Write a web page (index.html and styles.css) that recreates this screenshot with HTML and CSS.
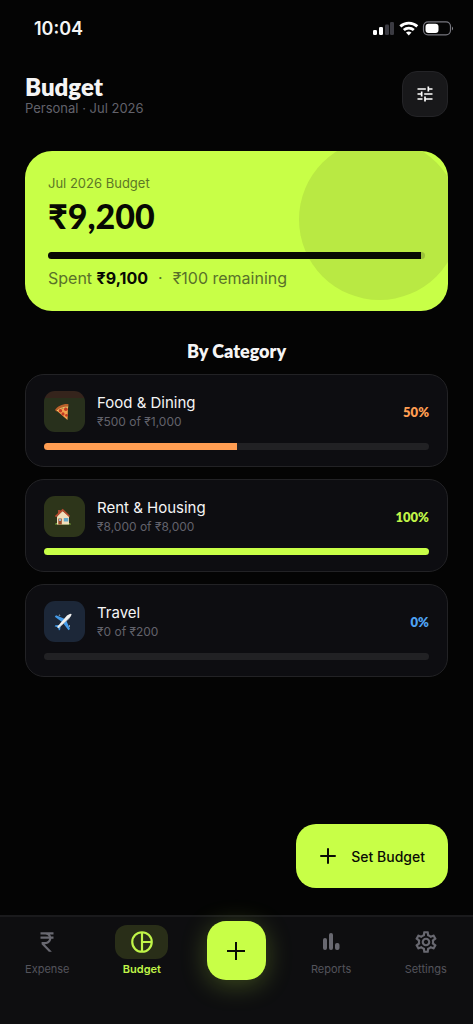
FILE: index.html
```html
<!DOCTYPE html>
<html lang="en">
<head>
<meta charset="utf-8">
<meta name="viewport" content="width=device-width, initial-scale=1">
<title>Budget</title>
<link rel="stylesheet" href="styles.css">
</head>
<body>
<div class="app">
  <div class="status">
    <span class="status-time">10:04</span>
    <svg class="status-icons" width="82" height="16" viewBox="0 0 82 16" aria-hidden="true">
      <rect x="0" y="9" width="4" height="5" rx="1.2" fill="#fff"/>
      <rect x="6" y="6" width="4" height="8" rx="1.2" fill="#fff"/>
      <rect x="12" y="3.500" width="4" height="10.500" rx="1.200" fill="#3b3b42"/>
      <rect x="17" y="1" width="4" height="13" rx="1.200" fill="#3b3b42"/>
      <g fill="none" stroke="#fff" stroke-width="2.800">
        <path d="M27.300 5.400a12.500 12.500 0 0 1 17 0"/>
        <path d="M30.800 9a7.500 7.500 0 0 1 10 0"/>
      </g>
      <path d="M33 11.600a4.200 4.200 0 0 1 5.500 0L35.750 14.500z" fill="#fff"/>
      <rect x="50.500" y="0.800" width="27" height="13" rx="4.500" fill="none" stroke="#77777f" stroke-width="1.200"/>
      <rect x="52.500" y="2.700" width="13" height="9.300" rx="3" fill="#fff"/>
      <path d="M79 5.500q2 2-0 4z" fill="#8a8a92"/>
    </svg>
  </div>

  <header class="header">
    <div>
      <h1 class="title">Budget</h1>
      <p class="subtitle">Personal · Jul 2026</p>
    </div>
    <button class="tune" type="button" aria-label="Filters">
      <svg width="20" height="20" viewBox="0 0 24 24" fill="#fff" aria-hidden="true"><path d="M3 17v2h6v-2zM3 5v2h10V5zm10 16v-2h8v-2h-8v-2h-2v6zM7 9v2H3v2h4v2h2V9zm14 4v-2H11v2zm-6-4h2V7h4V5h-4V3h-2z"/></svg>
    </button>
  </header>

  <main class="main">
    <section class="summary">
      <p class="summary-label">Jul 2026 Budget</p>
      <p class="summary-amount">₹9,200</p>
      <div class="summary-track"><div class="summary-fill" style="width:98.9%"></div></div>
      <p class="summary-note"><span>Spent <strong>₹9,100</strong></span><span>·</span><span>₹100 remaining</span></p>
    </section>

    <h2 class="section-title">By Category</h2>

    <div class="list">
      <article class="card food">
        <div class="card-row">
          <div class="badge">
            <svg width="18" height="18" viewBox="0 0 18 18" aria-hidden="true">
              <path d="M2.500 7.500 14 3.500 13.500 17z" fill="#f4a24e"/>
              <path d="M1 7C3.500 3.200 9 .600 14.500 1.200L14.300 3.800C10 3.500 6 5.300 2.600 8.500z" fill="#b9602b"/>
              <path d="M3 7.900C6 5.300 10 3.900 14.200 4" fill="none" stroke="#f7c66b"/>
              <circle cx="6.500" cy="7.800" r="1.700" fill="#c43a22"/><circle cx="11.800" cy="6.300" r="1.800" fill="#c43a22"/><circle cx="9" cy="10.900" r="1.600" fill="#c43a22"/><circle cx="12.500" cy="12.300" r="1.400" fill="#c43a22"/>
            </svg>
          </div>
          <div class="card-text"><h3 class="card-name">Food &amp; Dining</h3><p class="card-meta">₹500 of ₹1,000</p></div>
          <span class="percent">50%</span>
        </div>
        <div class="track"><div class="fill" style="width:50%"></div></div>
      </article>

      <article class="card rent">
        <div class="card-row">
          <div class="badge">
            <svg width="18" height="18" viewBox="0 0 18 18" aria-hidden="true">
              <path d="M1 16.500Q1 14.500 3.500 15h11.500q2 0 2 1.500z" fill="#78a83b"/>
              <path d="M4 2h2.500v4H4z" fill="#a64a30"/>
              <path d="M3 8.500 8.500 3l6.500 5v8.500H3z" fill="#f0ddbb"/>
              <path d="M1.500 8.700 8.700 2l6.800 6.500" fill="none" stroke="#b84a2e" stroke-width="1.700"/>
              <path d="M4.300 10.500h3.500v6H4.300z" fill="#9a4b2b"/><path d="M5 11h2v2H5z" fill="#87bad0"/>
              <path d="M9.800 10h4.500v3.500H9.800z" fill="#65a9ca"/>
            </svg>
          </div>
          <div class="card-text"><h3 class="card-name">Rent &amp; Housing</h3><p class="card-meta">₹8,000 of ₹8,000</p></div>
          <span class="percent">100%</span>
        </div>
        <div class="track"><div class="fill" style="width:100%"></div></div>
      </article>

      <article class="card travel">
        <div class="card-row">
          <div class="badge">
            <svg width="18" height="18" viewBox="0 0 18 18" aria-hidden="true">
              <path d="M11 6 2 2.300.800 3.800 8 9zM12 7l4 9-1.500 1.200L9 10z" fill="#459be8"/>
              <path d="M5 12 1.500 12.200.600 13.300 4 14.500 5 17.500 6.200 16.500 6.500 13z" fill="#459be8"/>
              <path d="M3.500 13.500 13 2.500Q16.500.300 17.300 1T15.500 5L4.800 14.800Q3 15.300 3.500 13.500z" fill="#f1f1ef"/>
              <path d="M5 14.500 15.500 5" stroke="#b9c0c6" stroke-width=".8"/>
              <path d="m4.500 2.600 1-1 1 1zM14.800 13l1.200-1v2z" fill="#d8e1e8"/>
            </svg>
          </div>
          <div class="card-text"><h3 class="card-name">Travel</h3><p class="card-meta">₹0 of ₹200</p></div>
          <span class="percent">0%</span>
        </div>
        <div class="track"><div class="fill" style="width:0%"></div></div>
      </article>
    </div>

    <button class="set-budget" type="button">
      <svg width="16" height="16" viewBox="0 0 16 16" fill="none" stroke="#0a0c05" stroke-width="2" stroke-linecap="round" aria-hidden="true"><path d="M8 1v14M1 8h14"/></svg>
      Set Budget
    </button>
  </main>

  <nav class="nav">
    <a class="tab" href="#expense">
      <span class="tab-icon"><svg width="26" height="26" viewBox="0 0 24 24" fill="currentColor" aria-hidden="true"><path d="M13.660 7c-.560-1.180-1.760-2-3.160-2H6V3h12v2h-3.260c.480.580.840 1.260 1.050 2H18v2h-2.020c-.250 2.800-2.610 5-5.480 5h-.730l6.730 7h-2.770L7 14v-2h3.500c1.760 0 3.220-1.300 3.460-3H6V7z"/></svg></span>
      <span>Expense</span>
    </a>
    <a class="tab active" href="#budget" aria-current="page">
      <span class="tab-icon"><svg width="26" height="26" viewBox="0 0 24 24" fill="none" stroke="currentColor" stroke-width="2" aria-hidden="true"><circle cx="12" cy="12" r="9"/><path d="M12 3v18M12 12h9"/></svg></span>
      <span>Budget</span>
    </a>
    <button class="add" type="button" aria-label="Add">
      <svg width="20" height="20" viewBox="0 0 20 20" fill="none" stroke="#0a0c05" stroke-width="2" aria-hidden="true"><path d="M10 1v18M1 10h18"/></svg>
    </button>
    <a class="tab" href="#reports">
      <span class="tab-icon"><svg width="26" height="26" viewBox="0 0 26 26" fill="currentColor" aria-hidden="true"><rect x="5" y="9" width="4" height="12" rx="2"/><rect x="11" y="4" width="4" height="17" rx="2"/><rect x="17" y="14" width="4.500" height="7" rx="2"/></svg></span>
      <span>Reports</span>
    </a>
    <a class="tab" href="#settings">
      <span class="tab-icon"><svg width="26" height="26" viewBox="0 0 24 24" fill="currentColor" aria-hidden="true"><path d="M19.430 12.980c.040-.320.070-.640.070-.980s-.030-.660-.070-.980l2.110-1.650c.190-.150.240-.420.120-.640l-2-3.460c-.090-.160-.260-.250-.440-.250-.060 0-.120.010-.170.030l-2.490 1c-.520-.400-1.080-.730-1.690-.980l-.380-2.650C14.460 2.180 14.250 2 14 2h-4c-.250 0-.460.180-.490.420l-.380 2.650c-.610.250-1.170.590-1.690.980l-2.490-1c-.060-.020-.120-.030-.180-.030-.170 0-.340.090-.430.250l-2 3.460c-.130.220-.070.490.120.640l2.110 1.650c-.040.320-.070.650-.070.980s.030.660.070.980l-2.110 1.650c-.190.150-.240.420-.120.640l2 3.460c.090.160.260.250.440.250.060 0 .120-.010.170-.030l2.490-1c.520.400 1.080.730 1.690.980l.380 2.650c.030.240.240.420.490.420h4c.250 0 .460-.180.490-.420l.380-2.650c.610-.250 1.170-.590 1.690-.980l2.490 1c.060.020.120.030.180.030.170 0 .340-.090.430-.250l2-3.460c.120-.220.070-.490-.120-.640zm-1.980-1.710c.040.310.050.520.050.730s-.020.430-.050.730l-.140 1.130.890.700 1.080.840-.700 1.210-1.270-.510-1.040-.420-.900.680c-.430.320-.840.560-1.250.730l-1.060.430-.160 1.130-.200 1.350h-1.400l-.190-1.350-.160-1.130-1.060-.430c-.430-.180-.830-.410-1.230-.710l-.910-.700-1.060.430-1.270.510-.700-1.210 1.080-.840.890-.700-.140-1.130c-.030-.310-.050-.540-.050-.740s.020-.430.050-.730l.140-1.130-.890-.700-1.080-.840.700-1.210 1.270.510 1.040.420.900-.680c.430-.320.840-.560 1.250-.730l1.060-.430.160-1.130.200-1.350h1.390l.190 1.350.160 1.130 1.060.430c.430.180.830.410 1.230.710l.910.700 1.060-.430 1.270-.510.700 1.210-1.070.850-.890.700zM12 8c-2.210 0-4 1.790-4 4s1.790 4 4 4 4-1.790 4-4-1.790-4-4-4m0 6c-1.100 0-2-.900-2-2s.900-2 2-2 2 .900 2 2-.900 2-2 2"/></svg></span>
      <span>Settings</span>
    </a>
  </nav>
</div>
</body>
</html>
```

FILE: styles.css
```css
* { box-sizing: border-box; }
body, h1, h2, h3, p { margin: 0; }
body {
  background: #040404;
  color: #f5f5f5;
  font-family: Inter, "Noto Sans", sans-serif;
}
button { border: 0; padding: 0; font: inherit; cursor: pointer; }
svg { display: block; flex: none; }

.app { display: flex; flex-direction: column; min-height: 100vh; }

.status {
  display: flex;
  align-items: center;
  justify-content: space-between;
  height: 57px;
  padding: 0 18px 0 34px;
}
.status-time { font-size: 18px; font-weight: 600; }

.header {
  display: flex;
  align-items: center;
  justify-content: space-between;
  padding: 14px 25px 0;
}
.title { font: 800 24px/28px Lato, sans-serif; }
.subtitle { font-size: 13px; line-height: 15px; color: #62626b; }
.tune {
  display: grid;
  place-items: center;
  width: 46px;
  height: 46px;
  border: 1px solid #242427;
  border-radius: 15px;
  background: #18181a;
}

.main {
  display: flex;
  flex-direction: column;
  flex: 1;
  padding: 34px 25px 27px;
}

.summary {
  position: relative;
  overflow: hidden;
  padding: 24px 23px 23px;
  border-radius: 27px;
  background: #c8ff47;
  color: #070903;
}
.summary::before {
  content: "";
  position: absolute;
  top: -12px;
  right: -12px;
  width: 161px;
  height: 161px;
  border-radius: 50%;
  background: #b9e943;
}
.summary > * { position: relative; }
.summary-label { font-size: 13px; line-height: 16px; color: #5d7726; }
.summary-amount { font: 900 34px/44px Lato, Inter, sans-serif; margin-top: 3px; }
.summary-track {
  height: 7px;
  margin-top: 14px;
  border-radius: 4px;
  overflow: hidden;
  background: #9bc33a;
}
.summary-fill { height: 100%; background: #070903; }
.summary-note {
  display: flex;
  gap: 10px;
  margin-top: 9px;
  font-size: 16px;
  line-height: 20px;
  color: #59712a;
}
.summary-note strong { font-weight: 700; color: #070903; }

.section-title {
  margin-top: 28px;
  font: 800 18px/24px Lato, sans-serif;
  text-align: center;
}

.list { display: flex; flex-direction: column; gap: 12px; margin-top: 11px; }
.card {
  padding: 16px 18px;
  border: 1px solid #222225;
  border-radius: 19px;
  background: #0d0d11;
}
.card-row { display: flex; align-items: center; gap: 12px; }
.badge {
  display: grid;
  place-items: center;
  width: 41px;
  height: 41px;
  padding-right: 4px;
  border-radius: 11px;
}
.card-text { flex: 1; }
.card-name { font-size: 15px; line-height: 20px; font-weight: 400; }
.card-meta { font-size: 12px; line-height: 18px; color: #62626b; }
.percent { font: 800 13px/20px Lato, sans-serif; }
.track {
  height: 7px;
  margin-top: 11px;
  border-radius: 4px;
  overflow: hidden;
  background: #212124;
}
.fill { height: 100%; }
.food .badge { background: linear-gradient(#35241c 7px, #28301c 7px); }
.food .percent { color: #ff9d52; }
.food .fill { background: #ff9d52; }
.rent .badge { background: #2d351a; }
.rent .percent { color: #c0f548; }
.rent .fill { background: #c8ff47; }
.travel .badge { background: #1c2738; }
.travel .percent { color: #4fa3f5; }

.set-budget {
  display: flex;
  align-items: center;
  gap: 15px;
  align-self: flex-end;
  height: 64px;
  margin-top: auto;
  padding: 0 23px 0 24px;
  border-radius: 20px;
  background: #c8ff47;
  color: #0a0c05;
  font-size: 14px;
  font-weight: 500;
}

.nav {
  display: grid;
  grid-template-columns: repeat(5, 1fr);
  justify-items: center;
  align-items: start;
  height: 109px;
  padding-top: 4px;
  border-top: 2px solid #1a1a1c;
  background: #0e0e10;
}
.tab {
  display: flex;
  flex-direction: column;
  align-items: center;
  gap: 2px;
  padding-top: 4px;
  color: #686870;
  font-size: 11px;
  line-height: 16px;
  text-decoration: none;
}
.tab > span:last-child { color: #54545c; }
.tab-icon {
  display: grid;
  place-items: center;
  width: 53px;
  height: 34px;
  border-radius: 12px;
}
.tab.active { font-weight: 600; }
.tab.active, .tab.active > span:last-child { color: #c0f548; }
.active .tab-icon { background: #292e18; }
.add {
  display: grid;
  place-items: center;
  width: 59px;
  height: 59px;
  border-radius: 19px;
  background: #c8ff47;
  box-shadow: 0 5px 26px rgba(200, 255, 71, 0.25);
}
```
